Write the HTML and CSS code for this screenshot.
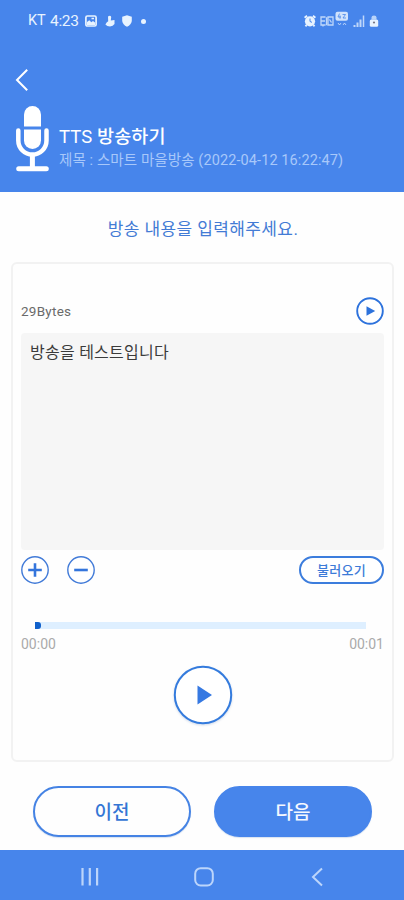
FILE: index.html
```
<!DOCTYPE html>
<html lang="ko">
<head>
<meta charset="utf-8">
<title>TTS 방송하기</title>
<link rel="stylesheet" href="styles.css">
</head>
<body>
<div class="screen">
  <header class="header">
    <div class="status">
      <div class="status-left">
        <span class="carrier">KT</span><span class="clock">4:23</span>
        <svg class="st-image" width="12" height="12" viewBox="0 0 12 12"><rect x=".9" y="1" width="10.2" height="10" rx="1.5" fill="none" stroke="currentColor" stroke-width="1.7"/><path d="M2 10V7l2.300-1.800 2 2L8 6l2 1.500V10z" fill="currentColor"/><path d="M6.500 3.500H9" stroke="currentColor" stroke-width="1.500"/></svg>
        <svg class="st-person" width="10" height="12" viewBox="0 0 10 12"><path d="M3 1.500Q5.500-.2 6.200 2L5.800 5.600 9.500 5v4Q8 11.400 5 11.400T.4 9.500Q1.500 7.300 3.200 6.300z" fill="currentColor"/></svg>
        <svg class="st-shield" width="10" height="12" viewBox="0 0 10 12"><path d="M5 .3 9.800 1.800V6Q9.300 9.800 5 11.800 .7 9.800 .2 6V1.800z" fill="currentColor"/></svg>
        <span class="dot"></span>
      </div>
      <div class="status-right">
        <svg width="12" height="12" viewBox="0 0 12 12"><circle cx="6" cy="6.300" r="5.100" fill="currentColor"/><path d="M.6 2.800 3 .8M11.400 2.800 9 .8M2.500 10l-1 1.300M9.500 10l1 1.300" stroke="currentColor" stroke-width="1.900"/><path d="M6 3.500v3l2 .8" fill="none" stroke="#4785eb" stroke-width="1"/></svg>
        <svg class="st-vibrate" width="14" height="12" viewBox="0 0 14 12"><path d="M5.500 2H1v8h4.500M1 6h4M6.500 2.200v8M8 2h5v8H8zM9.500 4.500l2 3M3 10v1.500" fill="none" stroke="currentColor" stroke-width="1.300"/></svg>
        <svg class="st-lte" width="14" height="16" viewBox="0 0 14 16"><rect x=".5" y=".8" width="12.500" height="9" rx="2" fill="currentColor"/><path d="M4.500 2.600 3 6h3M5 4.500v3.300M7.500 3.500h3L8 7h3" fill="none" stroke="#4785eb" stroke-width=".8"/><path d="m3 12 1.500 2L6 12M8 14l1.500-2 1.500 2" fill="none" stroke="currentColor" stroke-width=".8"/></svg>
        <svg class="st-signal" width="12" height="12" viewBox="0 0 12 12"><path d="M1.500 12v-2M4.500 12V7.500M7.500 12V4.500" stroke="currentColor" stroke-width="2"/><path d="M10.500 12V.5" stroke="currentColor" stroke-width="1.500"/></svg>
        <svg class="st-lock" width="10" height="14" viewBox="0 0 10 14"><rect x=".8" y="6.500" width="8.400" height="7.300" rx="1.500" fill="currentColor"/><path d="M2.500 6.500V4.500Q2.500 2.500 5 2.500t2.500 2v2z" fill="currentColor" opacity=".7"/><circle cx="5" cy="9.500" r="1.100" fill="#797785"/></svg>
      </div>
    </div>
    <svg class="back" width="14" height="24" viewBox="0 0 14 24"><path d="M12.200 1.800 2 12l10.200 10.200" fill="none" stroke="currentColor" stroke-width="2"/></svg>
    <div class="title-row">
      <svg class="mic" width="34" height="66" viewBox="0 0 34 66"><path d="M9 20.500V8.500a8.500 8.500 0 0 1 17 0v12z" fill="currentColor"/><path d="M9 23.500h17V34.500a8.500 8.500 0 0 1-17 0z" fill="currentColor"/><path d="M3.300 24.500V34.500a14.100 14.100 0 0 0 28.200 0V24.500" fill="none" stroke="currentColor" stroke-width="4.500" stroke-linecap="round"/><path d="M17.400 49v13" stroke="currentColor" stroke-width="5"/><path d="M3.700 62.700h27.600" stroke="currentColor" stroke-width="5" stroke-linecap="round"/></svg>
      <div class="titles">
        <h1><span class="latin">TTS</span> 방송하기</h1>
        <p class="subtitle">제목 : 스마트 마을방송 (2022-04-12 16:22:47)</p>
      </div>
    </div>
  </header>
  <main class="main">
    <p class="guide">방송 내용을 입력해주세요.</p>
    <section class="card">
      <div class="count-row">
        <span class="bytes">29Bytes</span>
        <button class="round small"><svg width="28" height="28" viewBox="0 0 28 28"><circle cx="14" cy="14" r="12.800" fill="#fff" stroke="#2d72dc" stroke-width="1.900"/><path d="M10.500 9.300v9.500l8.700-4.800z" fill="#2d72dc"/></svg></button>
      </div>
      <div class="message">방송을 테스트입니다</div>
      <div class="tools">
        <button class="round"><svg width="28" height="28" viewBox="0 0 28 28"><circle cx="14" cy="14" r="13.200" fill="#fff" stroke="#427bd8" stroke-width="1.400"/><path d="M7.200 14h13.600M14 7.200v13.600" stroke="#3475dc" stroke-width="2.600"/></svg></button>
        <button class="round minus"><svg width="28" height="28" viewBox="0 0 28 28"><circle cx="14" cy="14" r="13.200" fill="#fff" stroke="#427bd8" stroke-width="1.400"/><path d="M7.200 14h13.600" stroke="#3475dc" stroke-width="2.600"/></svg></button>
        <button class="load">불러오기</button>
      </div>
      <div class="track"><span class="thumb"></span></div>
      <div class="times"><span>00:00</span><span>00:01</span></div>
      <button class="play"><svg width="60" height="60" viewBox="0 0 60 60"><circle cx="30" cy="30" r="28.200" fill="#fff" stroke="#347bdd" stroke-width="2"/><path d="M24.500 20.500v19L39 30z" fill="#3679e2"/></svg></button>
    </section>
    <div class="actions">
      <button class="action prev">이전</button>
      <button class="action next">다음</button>
    </div>
  </main>
  <nav class="nav">
    <svg width="20" height="20" viewBox="0 0 20 20"><path d="M2.500 1v17.500M9.800 1v17.500M17.100 1v17.500" stroke="currentColor" stroke-width="2.200"/></svg>
    <svg width="20" height="20" viewBox="0 0 20 20"><rect x="1.200" y="1.200" width="17.600" height="17.300" rx="5.500" fill="none" stroke="currentColor" stroke-width="2"/></svg>
    <svg width="20" height="20" viewBox="0 0 20 20"><path d="M14 1.500 5 10l9 8.500" fill="none" stroke="currentColor" stroke-width="2"/></svg>
  </nav>
</div>
</body>
</html>
```
FILE: styles.css
```
* { box-sizing: border-box; }
body { margin: 0; font-family: Roboto, "Noto Sans CJK KR", sans-serif; background: #fefefe; }
h1, p { margin: 0; }
svg { display: block; flex: none; }
button { display: block; margin: 0; padding: 0; border: 0; background: none; font-family: inherit; }
.screen { width: 404px; height: 900px; display: flex; flex-direction: column; overflow: hidden; }
.header { flex: none; height: 192px; background: #4785eb; color: #fff; display: flex; flex-direction: column; }
.status { height: 42px; padding: 0 25px 0 28px; display: flex; justify-content: space-between; align-items: center; color: #e8f3ff; }
.status-left, .status-right { display: flex; align-items: center; }
.status-left { line-height: 18px; }
.carrier { font-size: 14.5px; width: 22px; }
.clock { font-size: 15.5px; width: 34px; letter-spacing: -.3px; }
.st-person { margin-left: 8px; }
.st-shield { margin-left: 7px; }
.dot { width: 5px; height: 5px; border-radius: 50%; background: currentColor; margin-left: 9px; }
.st-image { margin-left: 1px; }
.st-vibrate { margin-left: 4px; opacity: .75; }
.st-lte { margin: -5px 0 0 1px; opacity: .85; }
.st-signal { margin-left: 4px; opacity: .75; }
.st-lock { margin: -3px 0 0 4px; }
.status-right { padding-left: 1px; }
.back { margin: 26px 0 0 15px; }
.title-row { display: flex; margin: 14px 0 0 15px; }
.titles { margin: 19px 0 0 10px; white-space: nowrap; }
h1 { font-size: 18.5px; line-height: 24px; font-weight: 500; letter-spacing: .1px; }
.latin { font-weight: 400; }
.subtitle { font-size: 14.5px; line-height: 24px; color: #a8c8fa; letter-spacing: .1px; }
.main { flex: 1; display: flex; flex-direction: column; }
.guide { height: 70px; padding: 24px 0 0 2px; text-align: center; font-size: 17px; line-height: 26px; color: #437bd5; letter-spacing: .4px; }
.card { margin: 0 10px 0 11px; height: 500px; padding: 33px 8px 0; border: 2px solid #f2f2f2; border-radius: 6px; background: #fefefe; }
.count-row { height: 36px; display: flex; justify-content: space-between; align-items: flex-start; }
.bytes { font-size: 13.5px; line-height: 29px; color: #6a6a6a; letter-spacing: .25px; }
.message { height: 217px; padding: 7px 9px; border-radius: 4px; background: #f6f6f6; color: #3b3b3b; font-size: 16px; line-height: 25px; letter-spacing: .25px; }
.tools { margin-top: 6px; height: 28px; display: flex; }
.minus { margin-left: 18px; }
.load { margin-left: auto; width: 85px; height: 28px; border: 2px solid #3c7ddd; border-radius: 14px; color: #3d7bd8; background: #fff; font-size: 13px; line-height: 25px; font-weight: 500; letter-spacing: .25px; }
.track { margin: 38px 18px 0 14px; height: 7px; background: #deefff; display: flex; align-items: center; }
.thumb { width: 6px; height: 7px; border-radius: 0 3px 3px 0; background: #1261cb; }
.times { height: 24px; display: flex; justify-content: space-between; font-size: 14px; line-height: 25px; color: #aaa; padding-top: 3px; }
.play { margin: 12px auto 0; width: 60px; border-radius: 50%; filter: drop-shadow(0 1px 1px rgb(45 90 160 / .22)); }
.actions { margin-top: 24px; display: flex; gap: 23px; padding-left: 33px; }
.action { width: 158px; height: 51px; border-radius: 26px; border: 2px solid #4583e4; font-size: 19px; line-height: 49px; font-weight: 500; box-shadow: 0 1px 1px rgb(70 120 190 / .2); }
.prev { background: #fefefe; color: #3476d5; }
.next { background: #4785eb; border-color: #4785eb; color: #f4f8ff; }
.nav { flex: none; height: 50px; background: #4785eb; color: #bcd5fb; display: flex; align-items: center; padding: 3px 76px 0 80px; justify-content: space-between; }
```
